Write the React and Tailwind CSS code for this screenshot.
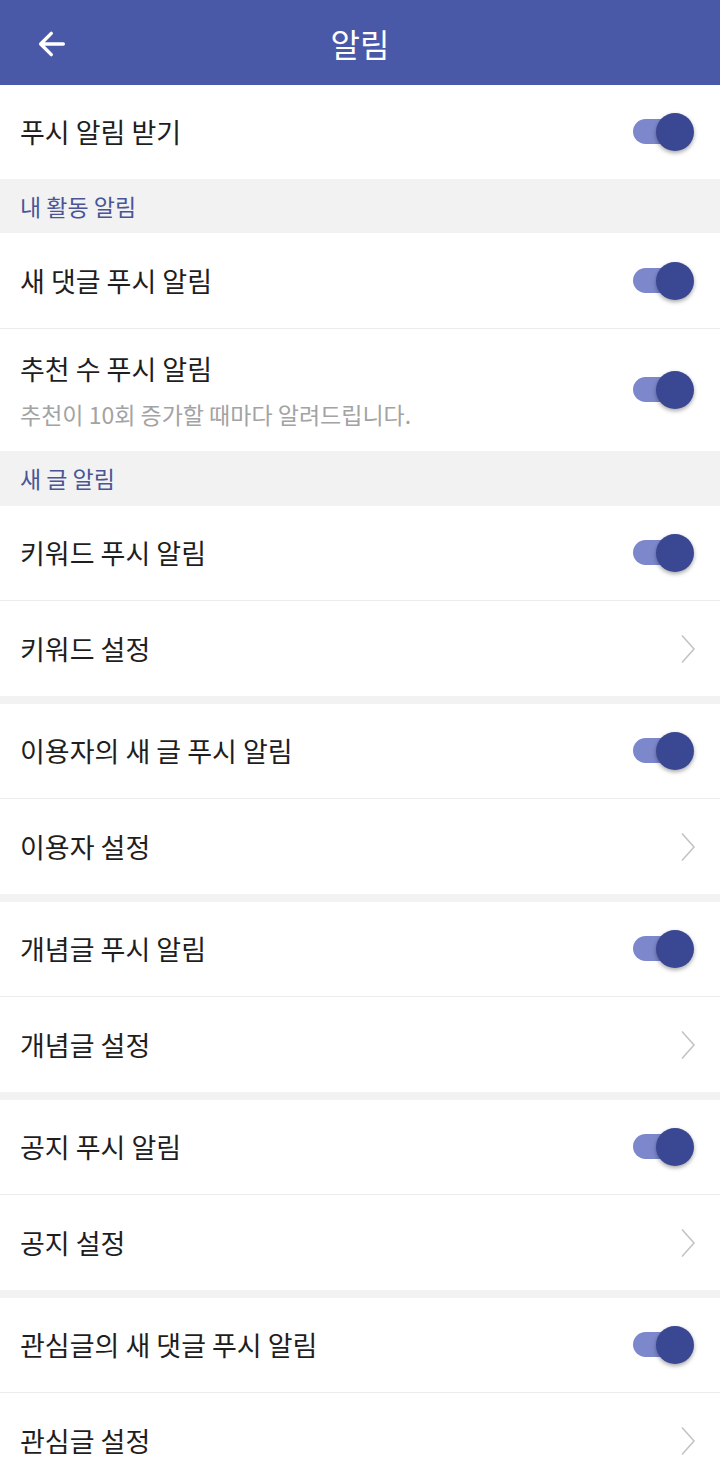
import React from "react";

const font = { fontFamily: '"Noto Sans CJK KR", "Noto Sans", sans-serif' };

function Toggle() {
  return (
    <div className="relative w-[62px] h-[40px] shrink-0">
      <div className="absolute left-[1px] top-[7px] w-[46px] h-[25px] rounded-full bg-[#7d88cc]" />
      <div className="absolute right-0 top-[1px] w-[38px] h-[38px] rounded-full bg-[#3a4792] shadow-[0_2px_4px_rgba(0,0,0,0.35)]" />
    </div>
  );
}

function Chevron() {
  return (
    <svg width="16" height="30" viewBox="0 0 16 30" className="shrink-0 mr-[24px]">
      <path d="M2 1.5 L14 15 L2 28.5" fill="none" stroke="#c4c4c4" strokeWidth="1.6" />
    </svg>
  );
}

function ToggleRow({ title, sub, border, h = "h-[95px]" }) {
  return (
    <div className={`flex items-center justify-between bg-white pl-[20px] pr-[26px] ${sub ? "h-[122px]" : h} ${border ? "border-b border-[#ececec]" : ""}`}>
      <div className="flex flex-col">
        <div className="text-[27px] leading-[36px] text-[#1e1e1e]">{title}</div>
        {sub && <div className="text-[23px] leading-[30px] text-[#a3a3a3] mt-[12px]">{sub}</div>}
      </div>
      <Toggle />
    </div>
  );
}

function LinkRow({ title }) {
  return (
    <div className="flex items-center justify-between bg-white pl-[20px] h-[95px]">
      <div className="text-[27px] leading-[36px] text-[#1e1e1e]">{title}</div>
      <Chevron />
    </div>
  );
}

function Section({ title, h = "h-[54px]" }) {
  return (
    <div className={`${h} bg-[#f2f2f3] flex items-center pl-[20px]`}>
      <div className="text-[23px] text-[#4a5596]">{title}</div>
    </div>
  );
}

function Gap() {
  return <div className="h-[8px] bg-[#f2f2f3]" />;
}

export default function App() {
  return (
    <div style={font} className="w-[720px] min-h-[1459px] bg-white overflow-hidden">
      <div className="h-[85px] bg-[#4a58a8] relative flex items-center justify-center">
        <svg width="34" height="34" viewBox="0 0 24 24" className="absolute left-[35px] top-[27px]">
          <path d="M20 12 H4.5 M11.5 4.5 L4 12 L11.5 19.5" fill="none" stroke="white" strokeWidth="2.4" strokeLinecap="round" strokeLinejoin="round" />
        </svg>
        <div className="text-[32px] text-white">알림</div>
      </div>
      <ToggleRow title="푸시 알림 받기" h="h-[94px]" />
      <Section title="내 활동 알림" />
      <ToggleRow title="새 댓글 푸시 알림" border h="h-[96px]" />
      <ToggleRow title="추천 수 푸시 알림" sub="추천이 10회 증가할 때마다 알려드립니다." />
      <Section title="새 글 알림" h="h-[55px]" />
      <ToggleRow title="키워드 푸시 알림" border />
      <LinkRow title="키워드 설정" />
      <Gap />
      <ToggleRow title="이용자의 새 글 푸시 알림" border />
      <LinkRow title="이용자 설정" />
      <Gap />
      <ToggleRow title="개념글 푸시 알림" border />
      <LinkRow title="개념글 설정" />
      <Gap />
      <ToggleRow title="공지 푸시 알림" border />
      <LinkRow title="공지 설정" />
      <Gap />
      <ToggleRow title="관심글의 새 댓글 푸시 알림" border />
      <LinkRow title="관심글 설정" />
    </div>
  );
}
